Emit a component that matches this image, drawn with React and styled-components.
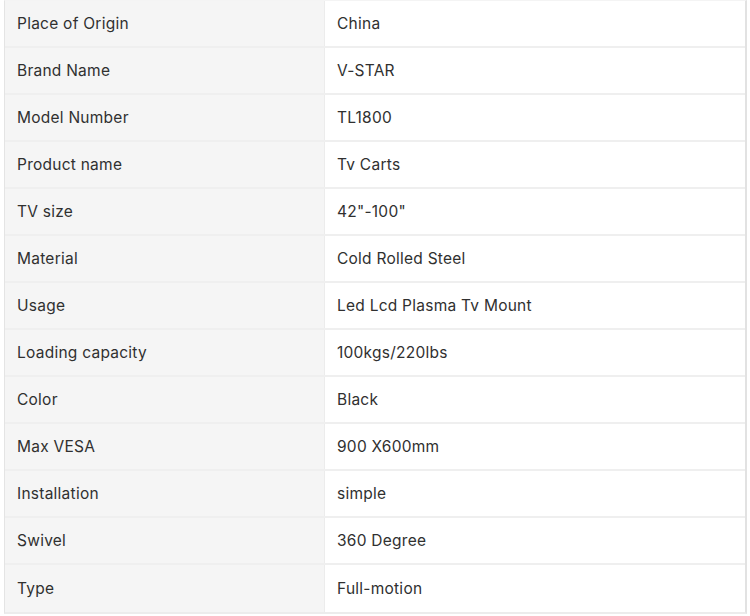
import React from "react";
import styled, { createGlobalStyle } from "styled-components";

const Global = createGlobalStyle`
  html, body { margin: 0; padding: 0; background: #ffffff; }
  body { font-family: Inter, "Noto Sans", sans-serif; }
`;

const Table = styled.div`
  width: 740px;
  margin-left: 4px;
  border-top: 1px solid #f4f4f4;
  border-left: 1px solid #e4e4e4;
  border-right: 2px solid #e2e2e2;
  border-bottom: 2px solid #ececec;
  display: flex;
  flex-direction: column;
`;

const Row = styled.div`
  display: grid;
  grid-template-columns: 319px 1fr;
  height: 47px;
  border-bottom: ${(p) => (p.$last ? "0" : "2px solid #efefef")};
  box-sizing: border-box;
`;

const Cell = styled.div`
  display: flex;
  align-items: center;
  padding-left: 12px;
  background: ${(p) => (p.$label ? "#f5f5f5" : "#ffffff")};
  border-left: ${(p) => (p.$label ? "0" : "1px solid #ececec")};
  font-size: 15.5px;
  color: #303030;
  letter-spacing: 0.25px;
`;

const rows = [
  ["Place of Origin", "China"],
  ["Brand Name", "V-STAR"],
  ["Model Number", "TL1800"],
  ["Product name", "Tv Carts"],
  ["TV size", '42"-100"'],
  ["Material", "Cold Rolled Steel"],
  ["Usage", "Led Lcd Plasma Tv Mount"],
  ["Loading capacity", "100kgs/220lbs"],
  ["Color", "Black"],
  ["Max VESA", "900 X600mm"],
  ["Installation", "simple"],
  ["Swivel", "360 Degree"],
  ["Type", "Full-motion"],
];

export default function App() {
  return (
    <>
      <Global />
      <Table>
        {rows.map(([k, v], i) => (
          <Row key={k} $last={i === rows.length - 1}>
            <Cell $label>{k}</Cell>
            <Cell>{v}</Cell>
          </Row>
        ))}
      </Table>
    </>
  );
}
